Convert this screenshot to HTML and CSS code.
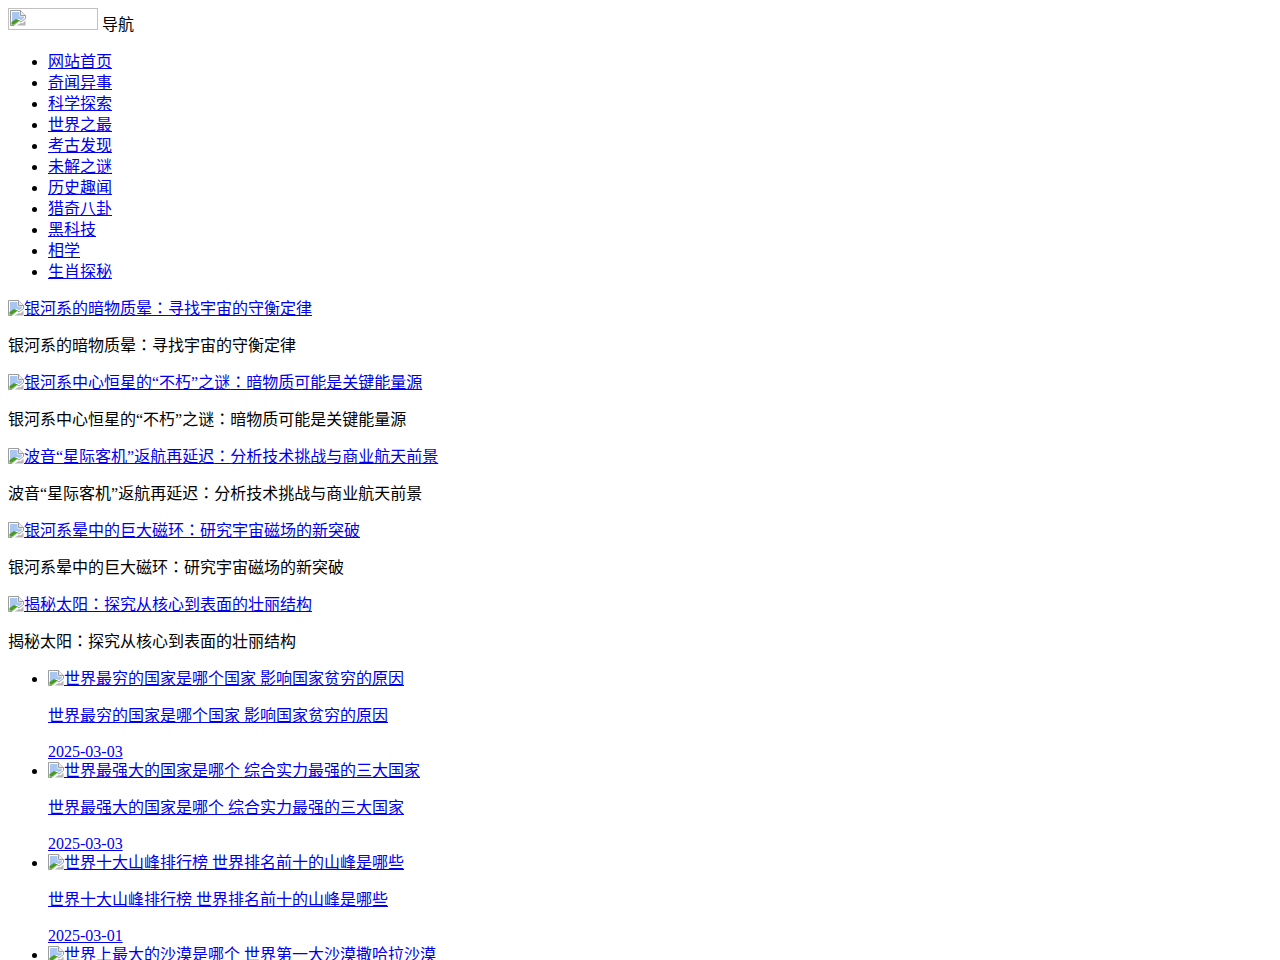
FILE: index.html
```html
<!DOCTYPE html>
<html>
<head>
<meta charset="utf-8">
<title>导航</title>
<link rel="stylesheet" href="styles.css">
</head>
<body>
<svg class="sprite" width="0" height="0" aria-hidden="true">
  <symbol id="broken" viewBox="0 0 16 16">
    <path d="M0.5 0.5H10.5L15.5 5.5V8.5L11 12L9 10.5L4 15.5H0.5Z" fill="#fff" stroke="#9c9c9c"/>
    <path d="M10.5 0.5V5.5H15.5" fill="#ececec" stroke="#9c9c9c"/>
    <path d="M2 2H9.5V6.5H14V8L11 10.5L9 9L5 10L2 12Z" fill="#a9c6f0"/>
    <path d="M1.5 14.8V12L6 9L9.5 10.5L3.8 14.8Z" fill="#479a22"/>
    <path d="M6.5 15.5L11 13L12.5 13.5L15.5 10.5V15.5Z" fill="#b4b4b4"/>
  </symbol>
</svg>
<div class="brand"><span class="logo"><svg class="icon"><use href="#broken"/></svg></span> 导航</div>
<ul>
  <li><a href="#">网站首页</a></li>
  <li><a href="#">奇闻异事</a></li>
  <li><a href="#">科学探索</a></li>
  <li><a href="#">世界之最</a></li>
  <li><a href="#">考古发现</a></li>
  <li><a href="#">未解之谜</a></li>
  <li><a href="#">历史趣闻</a></li>
  <li><a href="#">猎奇八卦</a></li>
  <li><a href="#">黑科技</a></li>
  <li><a href="#">相学</a></li>
  <li><a href="#">生肖探秘</a></li>
</ul>
<p><a href="#"><svg class="icon"><use href="#broken"/></svg>银河系的暗物质晕<span class="fw">：</span>寻找宇宙的守衡定律</a></p>
<p>银河系的暗物质晕<span class="fw">：</span>寻找宇宙的守衡定律</p>
<p><a href="#"><svg class="icon"><use href="#broken"/></svg>银河系中心恒星的“不朽”之谜<span class="fw">：</span>暗物质可能是关键能量源</a></p>
<p>银河系中心恒星的“不朽”之谜<span class="fw">：</span>暗物质可能是关键能量源</p>
<p><a href="#"><svg class="icon"><use href="#broken"/></svg>波音“星际客机”返航再延迟<span class="fw">：</span>分析技术挑战与商业航天前景</a></p>
<p>波音“星际客机”返航再延迟<span class="fw">：</span>分析技术挑战与商业航天前景</p>
<p><a href="#"><svg class="icon"><use href="#broken"/></svg>银河系晕中的巨大磁环<span class="fw">：</span>研究宇宙磁场的新突破</a></p>
<p>银河系晕中的巨大磁环<span class="fw">：</span>研究宇宙磁场的新突破</p>
<p><a href="#"><svg class="icon"><use href="#broken"/></svg>揭秘太阳<span class="fw">：</span>探究从核心到表面的壮丽结构</a></p>
<p>揭秘太阳<span class="fw">：</span>探究从核心到表面的壮丽结构</p>
<ul>
  <li><a href="#"><svg class="icon"><use href="#broken"/></svg>世界最穷的国家是哪个国家 影响国家贫穷的原因</a>
    <p><a href="#">世界最穷的国家是哪个国家 影响国家贫穷的原因</a></p>
    <div class="date"><a href="#">2025-03-03</a></div></li>
  <li><a href="#"><svg class="icon"><use href="#broken"/></svg>世界最强大的国家是哪个 综合实力最强的三大国家</a>
    <p><a href="#">世界最强大的国家是哪个 综合实力最强的三大国家</a></p>
    <div class="date"><a href="#">2025-03-03</a></div></li>
  <li><a href="#"><svg class="icon"><use href="#broken"/></svg>世界十大山峰排行榜 世界排名前十的山峰是哪些</a>
    <p><a href="#">世界十大山峰排行榜 世界排名前十的山峰是哪些</a></p>
    <div class="date"><a href="#">2025-03-01</a></div></li>
  <li><a href="#"><svg class="icon"><use href="#broken"/></svg>世界上最大的沙漠是哪个 世界第一大沙漠撒哈拉沙漠</a></li>
</ul>
</body>
</html>
```
FILE: styles.css
```css
body {
  font-family: "Liberation Serif", "Noto Sans CJK SC", serif;
  font-size: 16px;
  line-height: 21px;
}
.sprite {
  display: block;
}
.icon {
  width: 16px;
  height: 16px;
  vertical-align: -2px;
}
.fw {
  font-family: "Noto Sans CJK TC", sans-serif;
  line-height: 1;
}
.brand {
  height: 27px;
}
.date {
  height: 18px;
  line-height: 20px;
}
.logo {
  display: inline-block;
  box-sizing: border-box;
  width: 90px;
  height: 22px;
  border: 1px solid #c0c0c0;
  padding: 1px;
  overflow: hidden;
  line-height: 0;
}
```
